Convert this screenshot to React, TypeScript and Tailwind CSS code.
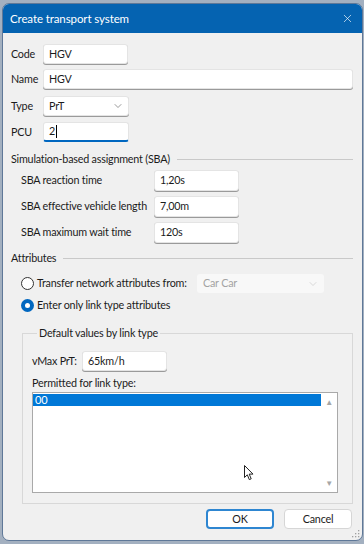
import { ChevronDown, X } from "lucide-react"

const font = { fontFamily: 'Lato, "Noto Sans", sans-serif' }

function TextBox({ value, className = "", focused = false }: { value: string; className?: string; focused?: boolean }) {
  return (
    <div
      className={`flex h-[20px] items-center rounded-[3px] border border-[#e4e4e4] bg-white pl-[5px] text-[#1b1b1b] shadow-[0_1px_0_#9a9a9a] ${
        focused ? "border-b-2 border-b-[#0067c0] shadow-none" : ""
      } ${className}`}
    >
      {value}
      {focused && <span className="ml-px inline-block h-[13px] w-px bg-black" />}
    </div>
  )
}

function Heading({ title }: { title: string }) {
  return (
    <div className="flex h-[16px] items-center gap-[7px]">
      <span className="leading-[16px] whitespace-nowrap">{title}</span>
      <div className="h-px flex-1 bg-[#c9c9c9]" />
    </div>
  )
}

function Radio({ checked }: { checked?: boolean }) {
  if (checked) {
    return (
      <span className="flex h-[13px] w-[13px] shrink-0 items-center justify-center rounded-full bg-[#0067c0]">
        <span className="h-[5px] w-[5px] rounded-full bg-white" />
      </span>
    )
  }
  return <span className="h-[13px] w-[13px] shrink-0 rounded-full border border-[#333333] bg-white" />
}

export default function App() {
  const sba = [
    { label: "SBA reaction time", value: "1,20s" },
    { label: "SBA effective vehicle length", value: "7,00m" },
    { label: "SBA maximum wait time", value: "120s" },
  ]

  return (
    <div className="h-[544px] w-[364px] overflow-hidden bg-[#a3b0c0] pl-[2px] pt-[3px]" style={font}>
      <div className="flex h-[538px] w-[361px] flex-col overflow-hidden rounded-[7px] border border-[#5f7898] bg-[#f0f0f0] text-[#1b1b1b]">
        {/* title bar */}
        <div className="flex h-[29px] shrink-0 items-center justify-between bg-[#0563b1] pl-[7px] pr-[8px] text-white">
          <span className="text-[11.5px] tracking-[-0.1px]">Create transport system</span>
          <X size={13} strokeWidth={1.2} />
        </div>

        <div className="relative flex flex-1 flex-col whitespace-nowrap pl-[8px] pr-[9px] text-[10.75px] tracking-[-0.2px]">
          {/* basic fields */}
          <div className="mt-[11px] flex items-center">
            <span className="w-[32px]">Code</span>
            <TextBox value="HGV" className="w-[85px]" />
          </div>
          <div className="mt-[5px] flex items-center">
            <span className="w-[32px]">Name</span>
            <TextBox value="HGV" className="flex-1" />
          </div>
          <div className="mt-[7px] flex items-center">
            <span className="w-[32px]">Type</span>
            <div className="flex h-[20px] w-[86px] items-center justify-between rounded-[3px] border border-[#e4e4e4] bg-white pl-[5px] pr-[4px] shadow-[0_1px_0_#9a9a9a]">
              PrT
              <ChevronDown size={12} strokeWidth={1.2} className="text-[#555]" />
            </div>
          </div>
          <div className="mt-[6px] flex items-center">
            <span className="w-[32px]">PCU</span>
            <TextBox value="2" className="w-[86px]" focused />
          </div>

          {/* SBA */}
          <div className="mt-[9px]">
            <Heading title="Simulation-based assignment (SBA)" />
          </div>
          <div className="mt-[3px] flex flex-col gap-[5px] pl-[10px]">
            {sba.map((row) => (
              <div key={row.label} className="flex items-center">
                <span className="w-[133px]">{row.label}</span>
                <TextBox value={row.value} className="h-[21px] w-[85px]" />
              </div>
            ))}
          </div>

          {/* attributes */}
          <div className="mt-[7px]">
            <Heading title="Attributes" />
          </div>
          <div className="mt-[8px] flex h-[19px] items-center pl-[10px]">
            <Radio />
            <span className="ml-[3px] w-[160px]">Transfer network attributes from:</span>
            <div className="flex h-[19px] w-[127px] items-center justify-between rounded-[3px] bg-[#f8f8f8] pl-[6px] pr-[5px] text-[#a3a3a3]">
              Car Car
              <ChevronDown size={12} strokeWidth={1} className="text-[#b8b8b8]" />
            </div>
          </div>
          <div className="mt-[3px] flex h-[18px] items-center pl-[10px]">
            <Radio checked />
            <span className="ml-[3px]">Enter only link type attributes</span>
          </div>

          <fieldset className="mt-[11px] ml-[11px] border border-[#d8d8d8] bg-[#f1f1f1] pb-[10px] pl-[9px] pr-[14px]">
            <legend className="ml-[5px] px-[2px] leading-[16px]">Default values by link type</legend>
            <div className="mt-[10px] flex items-center">
              <span className="w-[50px]">vMax PrT:</span>
              <TextBox value="65km/h" className="w-[85px]" />
            </div>
            <div className="mt-[4px] leading-[16px]">Permitted for link type:</div>
            <div className="relative mt-px flex h-[101px] border border-[#a9a9a9] bg-white">
              <div className="flex-1 pt-px">
                <div className="h-[12px] bg-[#0078d7] pl-[2px] text-[11px] leading-[12px] text-white">00</div>
              </div>
              <div className="flex w-[16px] flex-col items-center justify-between py-[5px] text-[8px] leading-none text-[#a6a6a6]">
                <span>▲</span>
                <span>▼</span>
              </div>
              {/* mouse pointer */}
              <svg className="absolute left-[211px] top-[72px]" width="10" height="16" viewBox="0 0 10 16">
                <path d="M0.5 0.5 L0.5 12.5 L3.3 9.8 L5.3 14.6 L7.2 13.8 L5.2 9.1 L9 9.1 Z" fill="white" stroke="#222" strokeWidth="1" strokeLinejoin="round" />
              </svg>
            </div>
          </fieldset>

          {/* buttons */}
          <div className="mt-[5px] flex justify-end gap-[10px] pr-[1px]">
            <button className="h-[20px] w-[68px] rounded-[4px] border-2 border-[#2e86d1] bg-white">OK</button>
            <button className="h-[20px] w-[68px] rounded-[4px] border border-[#d6d6d6] bg-white">Cancel</button>
          </div>

          <svg className="absolute bottom-[2px] right-[2px]" width="8" height="8" viewBox="0 0 8 8">
            <g fill="#a0a0a0">
              <rect x="6" y="0" width="1.3" height="1.3" />
              <rect x="3" y="3" width="1.3" height="1.3" />
              <rect x="6" y="3" width="1.3" height="1.3" />
              <rect x="0" y="6" width="1.3" height="1.3" />
              <rect x="3" y="6" width="1.3" height="1.3" />
              <rect x="6" y="6" width="1.3" height="1.3" />
            </g>
          </svg>
        </div>
      </div>
    </div>
  )
}
